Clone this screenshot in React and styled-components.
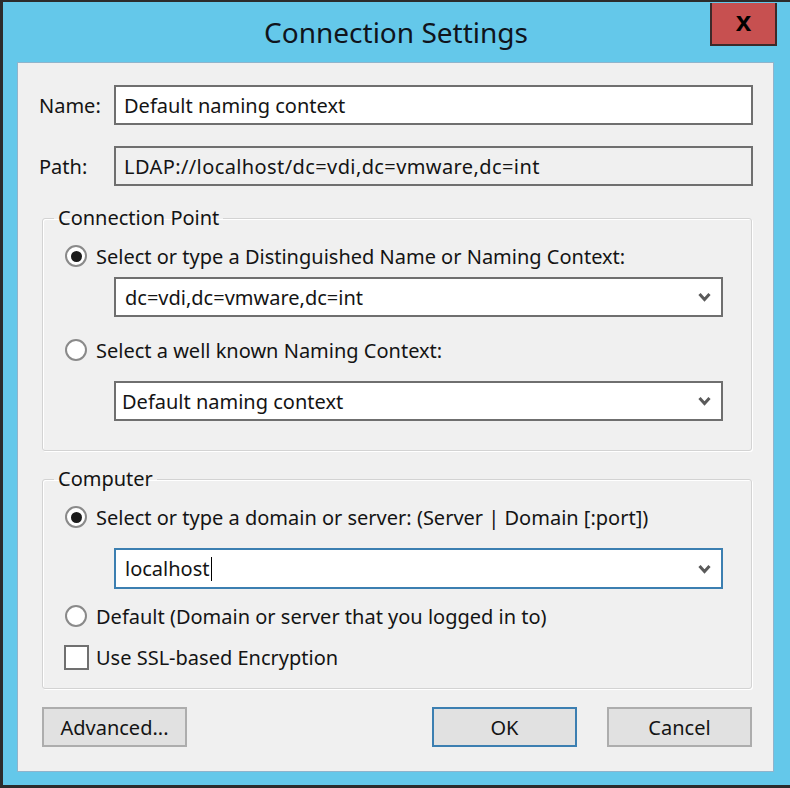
import React from 'react'
import styled, { createGlobalStyle } from 'styled-components'

const GlobalStyle = createGlobalStyle`
  html, body {
    margin: 0;
    padding: 0;
    background: #3a3a3a;
  }
  * {
    box-sizing: border-box;
  }
`

const Window = styled.div`
  width: 790px;
  height: 788px;
  display: flex;
  flex-direction: column;
  background: #64c8ea;
  border-top: 2px solid #2c2c2c;
  border-left: 3px solid #2c2c2c;
  border-bottom: 3px solid #2c2c2c;
  font-family: 'Noto Sans', 'Open Sans', sans-serif;
  font-size: 20px;
  color: #141414;
`

const TitleBar = styled.div`
  height: 60px;
  display: flex;
  align-items: flex-start;
  padding-right: 13px;
`

const Spacer = styled.div`
  width: 79px;
`

const Title = styled.div`
  flex: 1;
  text-align: center;
  font-size: 28px;
  line-height: 30px;
  padding-top: 15px;
  color: #10141c;
`

const CloseButton = styled.div`
  width: 67px;
  height: 43px;
  margin-top: 1px;
  background: #c75050;
  border: 2px solid #3d2a2a;
  border-top: none;
  display: flex;
  align-items: center;
  justify-content: center;
  font-family: 'Liberation Sans', Arial, sans-serif;
  font-weight: bold;
  font-size: 28px;
  line-height: 1;
  color: #000;
  padding-bottom: 4px;
`

const Client = styled.div`
  flex: 1;
  margin: 0 16px 13px 14px;
  background: #f0f0f0;
  border: 1px solid #8fb4cc;
  padding: 22px 20px 0 21px;
  display: flex;
  flex-direction: column;
`

const FieldRow = styled.div`
  display: grid;
  grid-template-columns: 75px 1fr;
  align-items: center;
  margin-bottom: ${(p) => p.$gap || 0}px;
`

const Label = styled.span`
  white-space: nowrap;
`

const TextBox = styled.div`
  height: 40px;
  border: 2px solid #6f6f6f;
  background: ${(p) => (p.$readOnly ? '#f0f0f0' : '#fff')};
  display: flex;
  align-items: center;
  padding-left: 8px;
  white-space: nowrap;
  letter-spacing: ${(p) => (p.$readOnly ? '0.4px' : 'normal')};
`

const Group = styled.fieldset`
  margin: 0 1px 0 3px;
  padding: 16px 28px ${(p) => p.$bottom}px 22px;
  border: 1px solid #d3d3d3;
  border-radius: 3px;
  box-shadow: inset 1px 1px 0 #fff, 1px 1px 0 #fff;
  display: flex;
  flex-direction: column;
`

const Legend = styled.legend`
  margin-left: -11px;
  padding: 0 4px;
  line-height: 20px;
`

const OptionRow = styled.label`
  display: flex;
  align-items: center;
  height: 24px;
  gap: ${(p) => p.$gapX || 9}px;
  white-space: nowrap;
  margin-bottom: ${(p) => p.$gap || 0}px;
`

const Radio = styled.span`
  width: 22px;
  height: 22px;
  border-radius: 50%;
  border: 2px solid #8a8a8a;
  background: #fff;
  display: flex;
  align-items: center;
  justify-content: center;
  flex-shrink: 0;
  &::after {
    content: '';
    width: 11px;
    height: 11px;
    border-radius: 50%;
    background: ${(p) => (p.$checked ? '#1b1b1b' : 'transparent')};
  }
`

const Check = styled.span`
  width: 25px;
  height: 25px;
  margin-left: -1px;
  border: 2px solid #707070;
  background: #fff;
  flex-shrink: 0;
`

const Combo = styled.div`
  height: ${(p) => p.$h || 40}px;
  margin-left: 49px;
  margin-bottom: ${(p) => p.$gap || 0}px;
  border: 2px solid ${(p) => (p.$focused ? '#3c7fb1' : '#6f6f6f')};
  background: #fff;
  display: flex;
  align-items: center;
  padding: 0 10px 0 ${(p) => p.$pad || 9}px;
  white-space: nowrap;
`

const ComboText = styled.span`
  flex: 1;
  display: flex;
  align-items: center;
`

const Caret = styled.span`
  width: 1px;
  height: 24px;
  background: #000;
  margin-left: 1px;
`

const GroupGap = styled.div`
  height: ${(p) => p.$h}px;
  flex-shrink: 0;
`

const ButtonBar = styled.div`
  display: flex;
  align-items: center;
  margin: 18px 1px 0 3px;
`

const Button = styled.div`
  width: 145px;
  height: 40px;
  background: #e1e1e1;
  border: 2px solid ${(p) => (p.$default ? '#3c7fb1' : '#adadad')};
  display: flex;
  align-items: center;
  justify-content: center;
  margin-left: ${(p) => p.$ml || 0}px;
`

const Chevron = () => (
  <svg width="13" height="10" viewBox="0 0 13 10">
    <path d="M1.5 2 L6.5 7.5 L11.5 2" fill="none" stroke="#5a5a5a" strokeWidth="3" />
  </svg>
)

const ComboBox = ({ children, ...rest }) => (
  <Combo {...rest}>
    <ComboText>{children}</ComboText>
    <Chevron />
  </Combo>
)

export default function App() {
  return (
    <>
      <GlobalStyle />
      <Window>
        <TitleBar>
          <Spacer />
          <Title>Connection Settings</Title>
          <CloseButton>x</CloseButton>
        </TitleBar>
        <Client>
          <FieldRow $gap={21}>
            <Label>Name:</Label>
            <TextBox>Default naming context</TextBox>
          </FieldRow>
          <FieldRow $gap={22}>
            <Label>Path:</Label>
            <TextBox $readOnly>LDAP://localhost/dc=vdi,dc=vmware,dc=int</TextBox>
          </FieldRow>

          <Group $bottom={29}>
            <Legend>Connection Point</Legend>
            <OptionRow $gap={9}>
              <Radio $checked />
              Select or type a Distinguished Name or Naming Context:
            </OptionRow>
            <ComboBox $gap={21}>dc=vdi,dc=vmware,dc=int</ComboBox>
            <OptionRow $gap={19}>
              <Radio />
              Select a well known Naming Context:
            </OptionRow>
            <ComboBox $pad={6}>Default naming context</ComboBox>
          </Group>

          <GroupGap $h={18} />

          <Group $bottom={19}>
            <Legend>Computer</Legend>
            <OptionRow $gap={19}>
              <Radio $checked />
              Select or type a domain or server: (Server | Domain [:port])
            </OptionRow>
            <ComboBox $focused $h={41} $gap={15}>
              localhost
              <Caret />
            </ComboBox>
            <OptionRow $gap={17}>
              <Radio />
              Default (Domain or server that you logged in to)
            </OptionRow>
            <OptionRow $gapX={7}>
              <Check />
              Use SSL-based Encryption
            </OptionRow>
          </Group>

          <ButtonBar>
            <Button>Advanced...</Button>
            <Button $default $ml={245}>
              OK
            </Button>
            <Button $ml={30}>Cancel</Button>
          </ButtonBar>
        </Client>
      </Window>
    </>
  )
}
